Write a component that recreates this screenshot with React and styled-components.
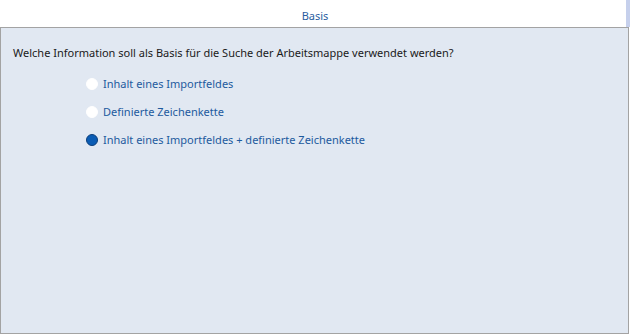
import React, { useState } from "react";
import styled, { createGlobalStyle } from "styled-components";

const GlobalStyle = createGlobalStyle`
  html, body {
    margin: 0;
    padding: 0;
    background: #ffffff;
  }
  body {
    font-family: "Noto Sans", "Open Sans", sans-serif;
  }
`;

const options = [
  "Inhalt eines Importfeldes",
  "Definierte Zeichenkette",
  "Inhalt eines Importfeldes + definierte Zeichenkette",
];

const App = () => {
  const [selected, setSelected] = useState(2);

  return (
    <>
      <GlobalStyle />
      <Page>
        <Header>
          <HeaderTitle>Basis</HeaderTitle>
          <HeaderStripe />
        </Header>
        <Panel>
          <Question>Welche Information soll als Basis für die Suche der Arbeitsmappe verwendet werden?</Question>
          <OptionList>
            {options.map((label, i) => (
              <OptionRow key={label} onClick={() => setSelected(i)}>
                <Radio checked={selected === i} />
                <OptionLabel>{label}</OptionLabel>
              </OptionRow>
            ))}
          </OptionList>
        </Panel>
      </Page>
    </>
  );
};

const Page = styled.div`
  width: 630px;
  height: 334px;
  display: flex;
  flex-direction: column;
  overflow: hidden;
`;

const Header = styled.div`
  height: 27px;
  display: flex;
  align-items: stretch;
  background: #ffffff;
`;

const HeaderTitle = styled.div`
  flex: 1;
  display: flex;
  align-items: center;
  justify-content: center;
  padding-top: 3px;
  padding-left: 4px;
  box-sizing: border-box;
  font-size: 11px;
  color: #2a5d9f;
`;

const HeaderStripe = styled.div`
  width: 4px;
  background: #c6d0ec;
`;

const Panel = styled.section`
  flex: 1;
  width: 629px;
  box-sizing: border-box;
  border: 1px solid #a3a3a3;
  background: #e1e8f2;
  padding: 17px 12px 0;
`;

const Question = styled.p`
  margin: 0;
  font-size: 11px;
  line-height: 16px;
  color: #1a1a1a;
`;

const OptionList = styled.div`
  display: flex;
  flex-direction: column;
  gap: 12px;
  padding: 15px 0 0 73px;
`;

const OptionRow = styled.label`
  display: flex;
  align-items: center;
  gap: 5px;
  height: 16px;
  cursor: pointer;
`;

const Radio = styled.span`
  width: 12px;
  height: 12px;
  border-radius: 50%;
  box-sizing: border-box;
  background: ${p => (p.checked ? "#0a5cb4" : "#ffffff")};
  border: 1px solid ${p => (p.checked ? "#0b3f7c" : "#ffffff")};
`;

const OptionLabel = styled.span`
  font-size: 11px;
  line-height: 16px;
  color: #1d5a9e;
`;

export default App;
